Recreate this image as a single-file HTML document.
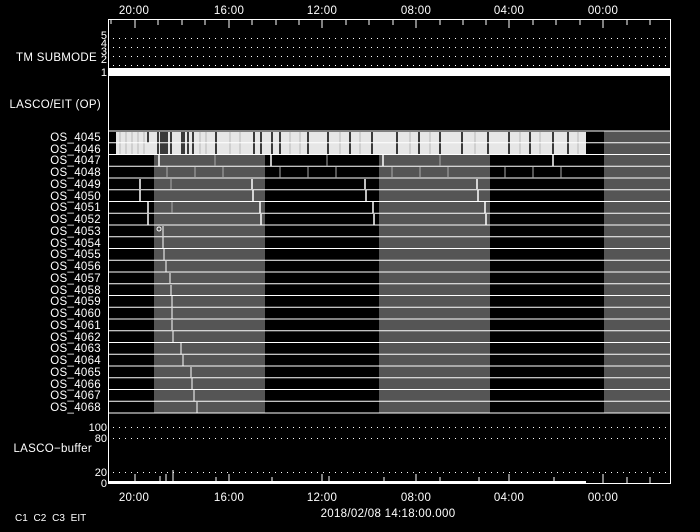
<!DOCTYPE html>
<html><head><meta charset="utf-8"><style>
html,body{margin:0;padding:0;background:#000;}
svg{display:block;}
text{font-family:"Liberation Sans",sans-serif;font-size:11px;fill:#fff;}
.l{font-size:11.5px;letter-spacing:0.3px;}
</style></head><body>
<svg width="700" height="532" viewBox="0 0 700 532" xmlns="http://www.w3.org/2000/svg">
<rect width="700" height="532" fill="#000"/>
<!-- top axis labels -->
<text class="l" x="134" y="14" text-anchor="middle">20:00</text>
<text class="l" x="229" y="14" text-anchor="middle">16:00</text>
<text class="l" x="322" y="14" text-anchor="middle">12:00</text>
<text class="l" x="416" y="14" text-anchor="middle">08:00</text>
<text class="l" x="509" y="14" text-anchor="middle">04:00</text>
<text class="l" x="603" y="14" text-anchor="middle">00:00</text>
<!-- TM submode panel -->
<line x1="108" y1="19.5" x2="671" y2="19.5" stroke="#fff"/>
<g stroke="#fff" stroke-width="1">
<line x1="111" y1="20" x2="111" y2="24"/><line x1="135" y1="20" x2="135" y2="28"/><line x1="158" y1="20" x2="158" y2="25"/><line x1="182" y1="20" x2="182" y2="25"/><line x1="205" y1="20" x2="205" y2="25"/><line x1="229" y1="20" x2="229" y2="28"/><line x1="252" y1="20" x2="252" y2="25"/><line x1="276" y1="20" x2="276" y2="25"/><line x1="299" y1="20" x2="299" y2="25"/><line x1="322" y1="20" x2="322" y2="28"/><line x1="346" y1="20" x2="346" y2="25"/><line x1="369" y1="20" x2="369" y2="25"/><line x1="393" y1="20" x2="393" y2="25"/><line x1="416" y1="20" x2="416" y2="28"/><line x1="440" y1="20" x2="440" y2="25"/><line x1="463" y1="20" x2="463" y2="25"/><line x1="486" y1="20" x2="486" y2="25"/><line x1="509" y1="20" x2="509" y2="28"/><line x1="533" y1="20" x2="533" y2="25"/><line x1="556" y1="20" x2="556" y2="25"/><line x1="580" y1="20" x2="580" y2="25"/><line x1="603" y1="20" x2="603" y2="28"/><line x1="627" y1="20" x2="627" y2="25"/><line x1="650" y1="20" x2="650" y2="25"/>
</g>
<g stroke="#fff" stroke-dasharray="1 5">
<line x1="113" y1="38.5" x2="670" y2="38.5"/><line x1="113" y1="47.5" x2="670" y2="47.5"/><line x1="113" y1="56.5" x2="670" y2="56.5"/><line x1="113" y1="65.5" x2="670" y2="65.5"/>
</g>
<rect x="109" y="68" width="562" height="8" fill="#fff"/>
<text x="107" y="39" text-anchor="end">5</text>
<text x="107" y="47" text-anchor="end">4</text>
<text x="107" y="55" text-anchor="end">3</text>
<text x="107" y="63" text-anchor="end">2</text>
<text x="107" y="76" text-anchor="end">1</text>
<text class="l" x="97" y="61" text-anchor="end">TM SUBMODE</text>
<line x1="108.5" y1="19" x2="108.5" y2="484" stroke="#fff"/>
<line x1="670.5" y1="19" x2="670.5" y2="484" stroke="#fff"/>
<text class="l" x="101" y="108" text-anchor="end">LASCO/EIT (OP)</text>
<!-- gray bands -->
<rect x="154" y="154" width="111" height="259" fill="#555"/>
<rect x="379" y="154" width="111" height="259" fill="#555"/>
<rect x="604" y="131" width="66" height="282" fill="#555"/>
<!-- rows 4045/4046 -->
<rect x="116" y="132" width="470" height="22" fill="#e6e6e6"/>
<g stroke="#000" stroke-width="1.5">
<line x1="148" y1="132" x2="148" y2="143"/><line x1="158" y1="132" x2="158" y2="154"/><line x1="161" y1="132" x2="161" y2="154"/><line x1="163" y1="132" x2="163" y2="154"/><line x1="165" y1="132" x2="165" y2="154"/><line x1="167" y1="132" x2="167" y2="154"/><line x1="171" y1="132" x2="171" y2="154"/><line x1="182" y1="132" x2="182" y2="154"/><line x1="184" y1="132" x2="184" y2="154"/><line x1="188" y1="132" x2="188" y2="154"/><line x1="193" y1="132" x2="193" y2="154"/><line x1="216" y1="132" x2="216" y2="154"/><line x1="254" y1="132" x2="254" y2="154"/><line x1="261" y1="132" x2="261" y2="154"/><line x1="272" y1="132" x2="272" y2="154"/><line x1="280" y1="132" x2="280" y2="154"/><line x1="308" y1="132" x2="308" y2="154"/><line x1="328" y1="132" x2="328" y2="154"/><line x1="350" y1="132" x2="350" y2="154"/><line x1="372" y1="132" x2="372" y2="154"/><line x1="397" y1="132" x2="397" y2="154"/><line x1="419" y1="132" x2="419" y2="154"/><line x1="440" y1="132" x2="440" y2="154"/><line x1="462" y1="132" x2="462" y2="154"/><line x1="488" y1="132" x2="488" y2="154"/><line x1="509" y1="132" x2="509" y2="154"/><line x1="530" y1="132" x2="530" y2="154"/><line x1="553" y1="132" x2="553" y2="154"/><line x1="568" y1="132" x2="568" y2="154"/>
</g>
<g stroke="#999" stroke-width="0.6">
<line x1="120" y1="132" x2="120" y2="154"/><line x1="126" y1="132" x2="126" y2="154"/><line x1="132" y1="132" x2="132" y2="154"/><line x1="138" y1="132" x2="138" y2="154"/><line x1="144" y1="132" x2="144" y2="154"/><line x1="200" y1="132" x2="200" y2="154"/><line x1="206" y1="132" x2="206" y2="154"/><line x1="230" y1="132" x2="230" y2="154"/><line x1="240" y1="132" x2="240" y2="154"/><line x1="290" y1="132" x2="290" y2="154"/><line x1="300" y1="132" x2="300" y2="154"/><line x1="340" y1="132" x2="340" y2="154"/><line x1="360" y1="132" x2="360" y2="154"/><line x1="410" y1="132" x2="410" y2="154"/><line x1="430" y1="132" x2="430" y2="154"/><line x1="475" y1="132" x2="475" y2="154"/><line x1="520" y1="132" x2="520" y2="154"/><line x1="540" y1="132" x2="540" y2="154"/><line x1="578" y1="132" x2="578" y2="154"/>
</g>
<!-- row lines -->
<g stroke="#fff" stroke-width="1">
<line x1="108" y1="131" x2="671" y2="131"/><line x1="108" y1="142.75" x2="671" y2="142.75"/><line x1="108" y1="154.5" x2="671" y2="154.5"/><line x1="108" y1="166.25" x2="671" y2="166.25"/><line x1="108" y1="178" x2="671" y2="178"/><line x1="108" y1="189.75" x2="671" y2="189.75"/><line x1="108" y1="201.5" x2="671" y2="201.5"/><line x1="108" y1="213.25" x2="671" y2="213.25"/><line x1="108" y1="225" x2="671" y2="225"/><line x1="108" y1="236.75" x2="671" y2="236.75"/><line x1="108" y1="248.5" x2="671" y2="248.5"/><line x1="108" y1="260.25" x2="671" y2="260.25"/><line x1="108" y1="272" x2="671" y2="272"/><line x1="108" y1="283.75" x2="671" y2="283.75"/><line x1="108" y1="295.5" x2="671" y2="295.5"/><line x1="108" y1="307.25" x2="671" y2="307.25"/><line x1="108" y1="319" x2="671" y2="319"/><line x1="108" y1="330.75" x2="671" y2="330.75"/><line x1="108" y1="342.5" x2="671" y2="342.5"/><line x1="108" y1="354.25" x2="671" y2="354.25"/><line x1="108" y1="366" x2="671" y2="366"/><line x1="108" y1="377.75" x2="671" y2="377.75"/><line x1="108" y1="389.5" x2="671" y2="389.5"/><line x1="108" y1="401.25" x2="671" y2="401.25"/><line x1="108" y1="413" x2="671" y2="413"/>
</g>
<!-- markers -->
<g stroke="#fff" stroke-width="1.5">
<line x1="159" y1="155" x2="159" y2="166"/><line x1="271" y1="155" x2="271" y2="166"/><line x1="383" y1="155" x2="383" y2="166"/><line x1="553" y1="155" x2="553" y2="166"/>
<line x1="140" y1="179" x2="140" y2="189"/><line x1="252" y1="179" x2="252" y2="189"/><line x1="365" y1="179" x2="365" y2="189"/><line x1="477" y1="179" x2="477" y2="189"/>
<line x1="140" y1="190" x2="140" y2="201"/><line x1="253" y1="190" x2="253" y2="201"/><line x1="366" y1="190" x2="366" y2="201"/><line x1="478" y1="190" x2="478" y2="201"/>
<line x1="148" y1="202" x2="148" y2="213"/><line x1="260" y1="202" x2="260" y2="213"/><line x1="373" y1="202" x2="373" y2="213"/><line x1="485" y1="202" x2="485" y2="213"/>
<line x1="148" y1="214" x2="148" y2="225"/><line x1="261" y1="214" x2="261" y2="225"/><line x1="374" y1="214" x2="374" y2="225"/><line x1="486" y1="214" x2="486" y2="225"/>
</g>
<g stroke="#aaa" stroke-width="1">
<line x1="215" y1="155" x2="215" y2="166"/><line x1="327" y1="155" x2="327" y2="166"/><line x1="440" y1="155" x2="440" y2="166"/>
<line x1="167" y1="167" x2="167" y2="178"/><line x1="195" y1="167" x2="195" y2="178"/><line x1="223" y1="167" x2="223" y2="178"/><line x1="280" y1="167" x2="280" y2="178"/><line x1="308" y1="167" x2="308" y2="178"/><line x1="336" y1="167" x2="336" y2="178"/><line x1="392" y1="167" x2="392" y2="178"/><line x1="420" y1="167" x2="420" y2="178"/><line x1="448" y1="167" x2="448" y2="178"/><line x1="505" y1="167" x2="505" y2="178"/><line x1="533" y1="167" x2="533" y2="178"/><line x1="561" y1="167" x2="561" y2="178"/>
<line x1="171" y1="179" x2="171" y2="189"/><line x1="172" y1="202" x2="172" y2="213"/>
</g>
<g stroke="#fff" stroke-width="1">
<line x1="163" y1="237" x2="163" y2="248"/><line x1="164" y1="249" x2="164" y2="260"/><line x1="166" y1="261" x2="166" y2="272"/><line x1="170" y1="273" x2="170" y2="283"/><line x1="171" y1="285" x2="171" y2="295"/><line x1="172" y1="296" x2="172" y2="307"/><line x1="172" y1="308" x2="172" y2="319"/><line x1="172" y1="320" x2="172" y2="330"/><line x1="173" y1="331" x2="173" y2="342"/><line x1="181" y1="343" x2="181" y2="354"/><line x1="183" y1="355" x2="183" y2="366"/><line x1="191" y1="367" x2="191" y2="377"/><line x1="192" y1="378" x2="192" y2="389"/><line x1="194" y1="390" x2="194" y2="401"/><line x1="197" y1="402" x2="197" y2="413"/><line x1="163" y1="226" x2="163" y2="236"/>
</g>
<circle cx="159" cy="229" r="2" stroke="#fff" fill="none"/>
<!-- labels -->
<g text-anchor="end" class="l">
<text class="l" x="101" y="141">OS_4045</text><text class="l" x="101" y="153">OS_4046</text><text class="l" x="101" y="164">OS_4047</text><text class="l" x="101" y="176">OS_4048</text><text class="l" x="101" y="188">OS_4049</text><text class="l" x="101" y="200">OS_4050</text><text class="l" x="101" y="211">OS_4051</text><text class="l" x="101" y="223">OS_4052</text><text class="l" x="101" y="235">OS_4053</text><text class="l" x="101" y="247">OS_4054</text><text class="l" x="101" y="258">OS_4055</text><text class="l" x="101" y="270">OS_4056</text><text class="l" x="101" y="282">OS_4057</text><text class="l" x="101" y="294">OS_4058</text><text class="l" x="101" y="305">OS_4059</text><text class="l" x="101" y="317">OS_4060</text><text class="l" x="101" y="329">OS_4061</text><text class="l" x="101" y="341">OS_4062</text><text class="l" x="101" y="352">OS_4063</text><text class="l" x="101" y="364">OS_4064</text><text class="l" x="101" y="376">OS_4065</text><text class="l" x="101" y="388">OS_4066</text><text class="l" x="101" y="399">OS_4067</text><text class="l" x="101" y="411">OS_4068</text>
</g>
<!-- buffer panel -->
<g stroke="#fff" stroke-dasharray="1 5">
<line x1="113" y1="427.5" x2="670" y2="427.5"/><line x1="113" y1="438.5" x2="670" y2="438.5"/><line x1="113" y1="472.5" x2="670" y2="472.5"/>
</g>
<text x="107" y="431" text-anchor="end">100</text>
<text x="107" y="442" text-anchor="end">80</text>
<text class="l" x="92" y="452" text-anchor="end">LASCO−buffer</text>
<text x="107" y="476" text-anchor="end">20</text>
<text x="107" y="487" text-anchor="end">0</text>
<rect x="109" y="481" width="477" height="2" fill="#fff"/>
<g stroke="#fff" stroke-width="1">
<line x1="135" y1="474" x2="135" y2="483"/><line x1="160" y1="476" x2="160" y2="483"/><line x1="166" y1="474" x2="166" y2="483"/><line x1="173" y1="470" x2="173" y2="483"/><line x1="216" y1="477" x2="216" y2="483"/><line x1="229" y1="474" x2="229" y2="483"/><line x1="272" y1="477" x2="272" y2="483"/><line x1="322" y1="474" x2="322" y2="483"/><line x1="329" y1="476" x2="329" y2="483"/><line x1="384" y1="477" x2="384" y2="483"/><line x1="416" y1="474" x2="416" y2="483"/><line x1="440" y1="477" x2="440" y2="483"/><line x1="479" y1="477" x2="479" y2="483"/><line x1="509" y1="474" x2="509" y2="483"/><line x1="554" y1="477" x2="554" y2="483"/><line x1="603" y1="474" x2="603" y2="483"/><line x1="627" y1="477" x2="627" y2="483"/><line x1="650" y1="477" x2="650" y2="483"/>
</g>
<line x1="108" y1="483.5" x2="671" y2="483.5" stroke="#fff"/>
<!-- bottom axis -->
<text class="l" x="134" y="501" text-anchor="middle">20:00</text>
<text class="l" x="229" y="501" text-anchor="middle">16:00</text>
<text class="l" x="322" y="501" text-anchor="middle">12:00</text>
<text class="l" x="416" y="501" text-anchor="middle">08:00</text>
<text class="l" x="509" y="501" text-anchor="middle">04:00</text>
<text class="l" x="603" y="501" text-anchor="middle">00:00</text>
<text class="l" x="388" y="517" text-anchor="middle">2018/02/08 14:18:00.000</text>
<text x="15" y="521" style="font-size:10px;word-spacing:3px">C1 C2 C3 EIT</text>
</svg>
</body></html>
